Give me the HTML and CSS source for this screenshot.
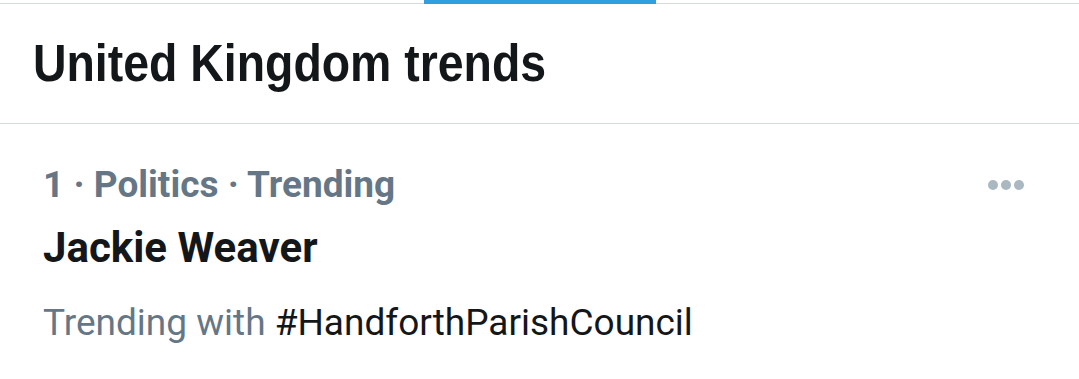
FILE: index.html
```html
<!DOCTYPE html>
<html lang="en">
<head>
    <meta charset="UTF-8">
    <meta name="viewport" content="width=device-width, initial-scale=1.0">
    <title>Trends</title>
    <link rel="stylesheet" href="styles.css">
</head>
<body>
    <!-- Tab strip -->
    <div class="tab-strip">
        <div class="tab-active"></div>
    </div>

    <!-- Header -->
    <div class="trends-header">
        <h1 class="trends-title">United Kingdom trends</h1>
    </div>

    <!-- Trend item -->
    <div class="trend-item">
        <div class="trend-meta">
            <span>1 · Politics · Trending</span>
            <span class="more-dots">
                <i></i><i></i><i></i>
            </span>
        </div>
        <div class="trend-name">Jackie Weaver</div>
        <div class="trend-context">Trending with <span class="hashtag">#HandforthParishCouncil</span></div>
    </div>
</body>
</html>
```

FILE: styles.css
```css
body {
    margin: 0;
    background-color: #fff;
    font-family: Roboto, "Liberation Sans", sans-serif;
    overflow: hidden;
}
.tab-strip {
    height: 3px;
    border-bottom: 1px solid #d6dbdf;
    position: relative;
}
.tab-active {
    position: absolute;
    left: 424px;
    top: 0;
    width: 232px;
    height: 4px;
    background-color: #2f9fe0;
}
.trends-header {
    height: 119px;
    border-bottom: 1px solid #d6dbdf;
    display: flex;
    align-items: center;
    padding-left: 33px;
}
.trends-title {
    display: inline-block;
    margin: 0;
    font-family: "Liberation Sans", Arial, sans-serif;
    font-weight: bold;
    font-size: 51px;
    color: #14171a;
    transform: scaleX(0.91);
    transform-origin: left center;
}
.trend-item {
    padding: 0 43px;
}
.trend-meta {
    display: flex;
    justify-content: space-between;
    align-items: center;
    margin-top: 39px;
    font-size: 37px;
    font-weight: bold;
    color: #657786;
}
.more-dots {
    display: flex;
    gap: 3px;
    margin-right: 12px;
}
.more-dots i {
    width: 10px;
    height: 10px;
    border-radius: 50%;
    background-color: #aab8c2;
}
.trend-name {
    margin-top: 17px;
    font-size: 42px;
    font-weight: bold;
    color: #14171a;
}
.trend-context {
    margin-top: 29px;
    font-size: 37px;
    color: #657786;
}
.hashtag {
    color: #14171a;
}
```
